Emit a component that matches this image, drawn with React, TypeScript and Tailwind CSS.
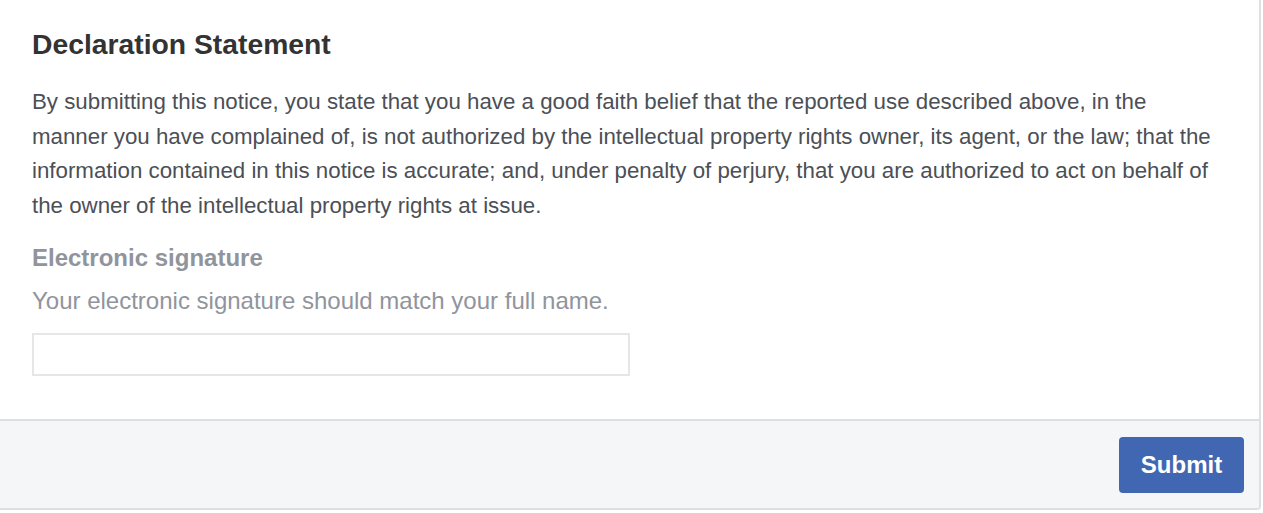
export default function App() {
  return (
    <div className="h-[513px] w-[1263px] bg-white font-['Liberation_Sans',Arial,sans-serif]">
      <div className="w-[1261px] overflow-hidden rounded-br-[4px] border-b-2 border-r-2 border-[#dddfe2] bg-white">
        <div className="px-8 pb-[43px] pt-[28px]">
          <h2 className="text-[28.3px] font-bold leading-[32px] text-[#333333]">Declaration Statement</h2>
          <p className="mt-[25px] max-w-[1190px] text-[22.3px] leading-[34.5px] text-[#4b4f56]">
            By submitting this notice, you state that you have a good faith belief that the reported use described above, in the
            manner you have complained of, is not authorized by the intellectual property rights owner, its agent, or the law; that the
            information contained in this notice is accurate; and, under penalty of perjury, that you are authorized to act on behalf of
            the owner of the intellectual property rights at issue.
          </p>
          <label className="mt-[21px] block text-[24px] font-bold leading-[28px] text-[#90949c]">Electronic signature</label>
          <div className="mt-[15px] text-[24px] leading-[28px] text-[#90949c]">
            Your electronic signature should match your full name.
          </div>
          <input
            type="text"
            className="mt-[18px] block h-[43px] w-[598px] border-2 border-[#e4e6e8] bg-white px-2 text-[22px] text-[#1d2129] outline-none"
          />
        </div>
        <div className="flex h-[89px] items-center justify-end border-t-2 border-[#dddfe2] bg-[#f5f6f7] pr-[15px]">
          <button
            type="button"
            className="mt-[1px] h-[56px] w-[125px] rounded-[4px] bg-[#4267b2] text-[24px] font-bold text-white"
          >
            Submit
          </button>
        </div>
      </div>
    </div>
  );
}
